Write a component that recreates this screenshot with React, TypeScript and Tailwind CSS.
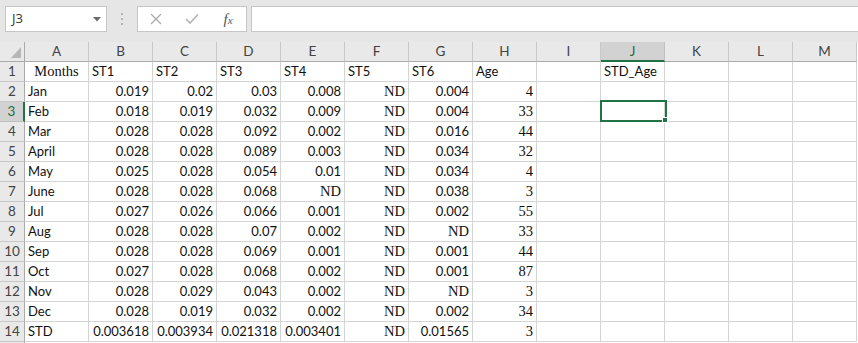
import React from 'react';

const cols = ['A', 'B', 'C', 'D', 'E', 'F', 'G', 'H', 'I', 'J', 'K', 'L', 'M'];

const rows: string[][] = [
  ['Months', 'ST1', 'ST2', 'ST3', 'ST4', 'ST5', 'ST6', 'Age', '', 'STD_Age'],
  ['Jan', '0.019', '0.02', '0.03', '0.008', 'ND', '0.004', '4'],
  ['Feb', '0.018', '0.019', '0.032', '0.009', 'ND', '0.004', '33'],
  ['Mar', '0.028', '0.028', '0.092', '0.002', 'ND', '0.016', '44'],
  ['April', '0.028', '0.028', '0.089', '0.003', 'ND', '0.034', '32'],
  ['May', '0.025', '0.028', '0.054', '0.01', 'ND', '0.034', '4'],
  ['June', '0.028', '0.028', '0.068', 'ND', 'ND', '0.038', '3'],
  ['Jul', '0.027', '0.026', '0.066', '0.001', 'ND', '0.002', '55'],
  ['Aug', '0.028', '0.028', '0.07', '0.002', 'ND', 'ND', '33'],
  ['Sep', '0.028', '0.028', '0.069', '0.001', 'ND', '0.001', '44'],
  ['Oct', '0.027', '0.028', '0.068', '0.002', 'ND', '0.001', '87'],
  ['Nov', '0.028', '0.029', '0.043', '0.002', 'ND', 'ND', '3'],
  ['Dec', '0.028', '0.019', '0.032', '0.002', 'ND', '0.002', '34'],
  ['STD', '0.003618', '0.003934', '0.021318', '0.003401', 'ND', '0.01565', '3'],
];

function Cell({ value, col, row }: { value: string; col: number; row: number }) {
  const isNum = value !== '' && !isNaN(Number(value));
  const serif = value === 'ND' || value === 'Months' || (col === 7 && row > 1);
  const selected = col === 9 && row === 3;
  return (
    <div
      className={`relative flex h-[20px] items-center overflow-visible whitespace-nowrap border-b border-r border-[#d4d4d4] px-[3px] text-[#111] ${
        value === 'Months' ? 'justify-center' : isNum || value === 'ND' ? 'justify-end' : 'justify-start'
      } ${serif ? "[font-family:'Liberation_Serif',serif] text-[14.5px]" : "[font-family:Lato,'Liberation_Sans',sans-serif] text-[13px]"}`}
    >
      {value}
      {selected && (
        <div className="absolute -left-[1px] -top-[2px] z-10 h-[22px] w-[67px] border-2 border-[#217346]">
          <div className="absolute -bottom-[3px] -right-[3px] h-[6px] w-[6px] border border-white bg-[#217346]" />
        </div>
      )}
    </div>
  );
}

export default function App() {
  return (
    <div className="h-[343px] w-[858px] overflow-hidden bg-white">
      {/* formula bar */}
      <div className="flex h-[42px] items-start bg-[#e6e6e6] pl-[5px] pt-[6px]">
        <div className="flex h-[26px] w-[102px] items-center justify-between border border-[#c6c6c6] bg-white pl-[6px] pr-[5px]">
          <span className="text-[13px] text-[#333] [font-family:'Open_Sans','Liberation_Sans',sans-serif]">J3</span>
          <svg width="8" height="5" viewBox="0 0 8 5">
            <path d="M0 0 L8 0 L4 4.5 Z" fill="#6b6b6b" />
          </svg>
        </div>
        <div className="flex h-[26px] w-[30px] flex-col items-center justify-center gap-[3px]">
          <div className="h-[2px] w-[2px] bg-[#b4b4b4]" />
          <div className="h-[2px] w-[2px] bg-[#b4b4b4]" />
          <div className="h-[2px] w-[2px] bg-[#b4b4b4]" />
        </div>
        <div className="flex h-[26px] w-[110px] items-center border border-[#c6c6c6] bg-white">
          <div className="flex w-[36px] justify-center">
            <svg width="12" height="12" viewBox="0 0 12 12">
              <path d="M1 1 L11 11 M11 1 L1 11" stroke="#a9a9a9" strokeWidth="1.3" />
            </svg>
          </div>
          <div className="flex w-[36px] justify-center">
            <svg width="14" height="12" viewBox="0 0 14 12">
              <path d="M1 6 L5 10 L13 1.5" stroke="#b4b4b4" strokeWidth="1.6" fill="none" />
            </svg>
          </div>
          <div className="flex w-[36px] justify-center">
            <span className="italic text-[15px] leading-none text-[#555] [font-family:'Liberation_Serif',serif]">
              f<span className="text-[11px]">x</span>
            </span>
          </div>
        </div>
        <div className="ml-[4px] h-[26px] flex-1 border border-r-0 border-[#c6c6c6] bg-white" />
      </div>

      {/* grid */}
      <div className="grid grid-cols-[25px_repeat(13,64px)] [font-family:Lato,'Liberation_Sans',sans-serif]">
        <div className="relative h-[20px] border-b border-r border-[#ababab] bg-[#e9e9e9]">
          <svg className="absolute bottom-[3px] right-[3px]" width="10" height="11" viewBox="0 0 10 11">
            <path d="M10 0 L10 11 L0 11 Z" fill="#b6b6b6" />
          </svg>
        </div>
        {cols.map((c, i) => (
          <div
            key={c}
            className={`flex h-[20px] items-center justify-center border-r text-[13.5px] ${
              i === 9
                ? 'border-b-2 border-b-[#217346] border-r-[#c0c0c0] bg-[#d2d2d2] text-[#1e6b40]'
                : 'border-b border-b-[#ababab] border-r-[#c8c8c8] bg-[#e9e9e9] text-[#444]'
            }`}
          >
            {c}
          </div>
        ))}
        {rows.map((r, ri) => (
          <React.Fragment key={ri}>
            <div
              className={`flex h-[20px] items-center justify-center border-b text-[13.5px] ${
                ri === 2
                  ? 'border-r-2 border-r-[#217346] border-b-[#c0c0c0] bg-[#d2d2d2] text-[#1e6b40]'
                  : 'border-r border-r-[#ababab] border-b-[#c8c8c8] bg-[#e9e9e9] text-[#444]'
              }`}
            >
              {ri + 1}
            </div>
            {cols.map((c, ci) => (
              <Cell key={c} value={r[ci] ?? ''} col={ci} row={ri + 1} />
            ))}
          </React.Fragment>
        ))}
        <div className="h-[20px] border-r border-[#ababab] bg-[#e9e9e9]" />
      </div>
    </div>
  );
}
